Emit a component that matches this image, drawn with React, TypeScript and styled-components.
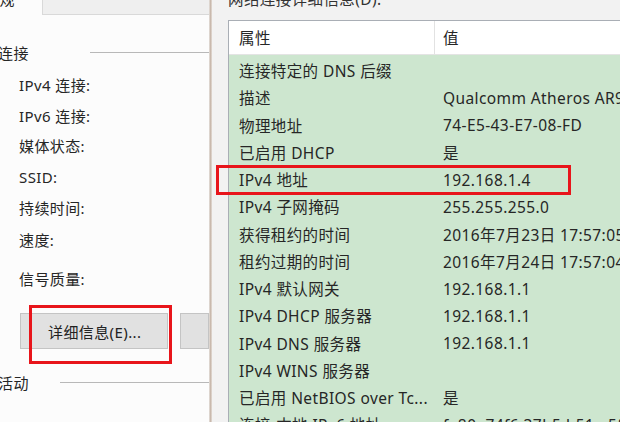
import React from 'react';
import styled, { createGlobalStyle } from 'styled-components';

const GlobalStyle = createGlobalStyle`
  html, body {
    margin: 0;
    padding: 0;
    background: #ffffff;
  }
  body {
    font-family: "Noto Sans", "Noto Sans CJK SC", sans-serif;
    color: #262626;
    letter-spacing: 0.4px;
  }
`;

const Screen = styled.div`
  width: 620px;
  height: 422px;
  overflow: hidden;
  display: flex;
  background: #fbfbfb;
`;

const LeftPanel = styled.div`
  width: 209px;
  flex-shrink: 0;
  display: flex;
  flex-direction: column;
  background: #fcfcfc;
  font-size: 15px;
`;

const TopRow = styled.div`
  display: flex;
  height: 15px;
  overflow: hidden;
`;

const CutLabel = styled.div`
  width: 42px;
  margin-left: -16px;
  padding-right: 16px;
  margin-top: -11px;
  line-height: 20px;
`;

const TopBox = styled.div`
  flex: 1;
  background: #efefef;
  border: 1px solid #d9d9d9;
  border-top: none;
  border-right: none;
`;

const Section = styled.div<{ $top: number; $lineStart: number }>`
  display: flex;
  align-items: center;
  margin-top: ${p => p.$top}px;
  height: 20px;

  span {
    width: ${p => p.$lineStart}px;
    margin-left: -2px;
    flex-shrink: 0;
  }

  &::after {
    content: '';
    flex: 1;
    height: 1px;
    background: #b8b8b8;
  }
`;

const Labels = styled.div`
  display: flex;
  flex-direction: column;
  padding-left: 19px;
  margin-top: 8px;
`;

const Label = styled.div<{ $h?: number }>`
  height: ${p => p.$h ?? 30.5}px;
  line-height: 30px;
`;

const ButtonRow = styled.div`
  display: flex;
  gap: 12px;
  padding-left: 20px;
  margin-top: 19px;
`;

const ButtonWrap = styled.div`
  position: relative;
`;

const GrayButton = styled.div<{ $w: number }>`
  width: ${p => p.$w}px;
  height: 36px;
  background: #e1e1e1;
  border: 1px solid #c4c4c4;
  box-sizing: border-box;
  display: flex;
  align-items: center;
  padding-left: 27px;
  font-size: 15px;
  color: #222;
`;

const RedBox = styled.div<{ $l: number; $t: number; $w: number; $h: number }>`
  position: absolute;
  left: ${p => p.$l}px;
  top: ${p => p.$t}px;
  width: ${p => p.$w}px;
  height: ${p => p.$h}px;
  border: 3px solid #e8151b;
  box-sizing: border-box;
  pointer-events: none;
`;

const Divider = styled.div`
  width: 3px;
  flex-shrink: 0;
  background: linear-gradient(to right, #e6e2de, #c9b9ad, #e3dcd6);
`;

const RightPanel = styled.div`
  flex: 1;
  display: flex;
  flex-direction: column;
  background: #f2f2f2;
  padding-left: 16px;
  min-width: 0;
  font-size: 15.5px;
`;

const DialogTitle = styled.div`
  height: 20px;
  line-height: 20px;
  margin-top: -11px;
  margin-bottom: 11px;
  color: #333;
`;

const ListBox = styled.div`
  border-left: 1px solid #a9aeb5;
  border-top: 1px solid #a9aeb5;
  background: #cde6cf;
  display: flex;
  flex-direction: column;
`;

const HeaderRow = styled.div`
  display: grid;
  grid-template-columns: 206px 1fr;
  height: 33px;
  background: #ffffff;
  border-bottom: 1px solid #e4e4e4;
  align-items: center;

  div {
    height: 100%;
    display: flex;
    align-items: center;
  }
  div:first-child {
    padding-left: 10px;
    border-right: 1px solid #e2e2e2;
  }
  div:last-child {
    padding-left: 8px;
  }
`;

const Rows = styled.div`
  padding-top: 2px;
`;

const Row = styled.div`
  position: relative;
  display: grid;
  grid-template-columns: 207px 1fr;
  height: 27.25px;
  align-items: center;
  white-space: nowrap;
`;

const Cell = styled.div<{ $pad: number }>`
  padding-left: ${p => p.$pad}px;
  overflow: hidden;
`;

const details: [string, string][] = [
  ['连接特定的 DNS 后缀', ''],
  ['描述', 'Qualcomm Atheros AR9485WB-EG Wireless'],
  ['物理地址', '74-E5-43-E7-08-FD'],
  ['已启用 DHCP', '是'],
  ['IPv4 地址', '192.168.1.4'],
  ['IPv4 子网掩码', '255.255.255.0'],
  ['获得租约的时间', '2016年7月23日 17:57:05'],
  ['租约过期的时间', '2016年7月24日 17:57:04'],
  ['IPv4 默认网关', '192.168.1.1'],
  ['IPv4 DHCP 服务器', '192.168.1.1'],
  ['IPv4 DNS 服务器', '192.168.1.1'],
  ['IPv4 WINS 服务器', ''],
  ['已启用 NetBIOS over Tc...', '是'],
  ['连接-本地 IPv6 地址', 'fe80::74f6:37b5:b51e:5f2c%4'],
];

export default function App() {
  return (
    <>
      <GlobalStyle />
      <Screen>
        <LeftPanel>
          <TopRow>
            <CutLabel>常规</CutLabel>
            <TopBox />
          </TopRow>
          <Section $top={27} $lineStart={92}>
            <span>连接</span>
          </Section>
          <Labels>
            <Label>IPv4 连接:</Label>
            <Label>IPv6 连接:</Label>
            <Label>媒体状态:</Label>
            <Label $h={31.5}>SSID:</Label>
            <Label $h={31.5}>持续时间:</Label>
            <Label $h={39}>速度:</Label>
            <Label>信号质量:</Label>
          </Labels>
          <ButtonRow>
            <ButtonWrap>
              <GrayButton $w={148}>详细信息(E)...</GrayButton>
              <RedBox $l={9} $t={-8} $w={143} $h={59} />
            </ButtonWrap>
            <GrayButton $w={40} />
          </ButtonRow>
          <Section $top={23} $lineStart={62}>
            <span>活动</span>
          </Section>
        </LeftPanel>
        <Divider />
        <RightPanel>
          <DialogTitle>网络连接详细信息(D):</DialogTitle>
          <ListBox>
            <HeaderRow>
              <div>属性</div>
              <div>值</div>
            </HeaderRow>
            <Rows>
              {details.map(([name, value]) => (
                <Row key={name}>
                  <Cell $pad={10}>{name}</Cell>
                  <Cell $pad={7}>{value}</Cell>
                  {name === 'IPv4 地址' && <RedBox $l={-13} $t={-1} $w={355} $h={30} />}
                </Row>
              ))}
            </Rows>
          </ListBox>
        </RightPanel>
      </Screen>
    </>
  );
}
